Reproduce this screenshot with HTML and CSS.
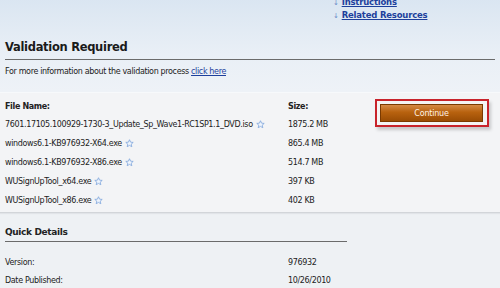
FILE: index.html
```html
<!DOCTYPE html>
<html lang="en">
<head>
    <meta charset="UTF-8">
    <title>Validation Required</title>
    <link rel="stylesheet" href="styles.css">
</head>
<body>
    <div class="top">
        <ul class="links">
            <li><span class="arrow">&#8595;</span><a href="#">Instructions</a></li>
            <li><span class="arrow">&#8595;</span><a href="#">Related Resources</a></li>
        </ul>
        <h1>Validation Required</h1>
        <p class="intro">For more information about the validation process <a href="#">click here</a></p>
    </div>

    <div class="files">
        <div class="file-table">
            <div class="row head">
                <span class="name">File Name:</span>
                <span class="size">Size:</span>
            </div>
            <div class="row">
                <span class="name">7601.17105.100929-1730-3_Update_Sp_Wave1-RC1SP1.1_DVD.iso <svg class="star" viewBox="0 0 10 10"><path d="M5 .8l1.2 2.7 2.9.3-2.2 1.9.7 2.9L5 7.1 2.4 8.6l.7-2.9L.9 3.8l2.9-.3z"/></svg></span>
                <span class="size">1875.2 MB</span>
            </div>
            <div class="row">
                <span class="name">windows6.1-KB976932-X64.exe <svg class="star" viewBox="0 0 10 10"><path d="M5 .8l1.2 2.7 2.9.3-2.2 1.9.7 2.9L5 7.1 2.4 8.6l.7-2.9L.9 3.8l2.9-.3z"/></svg></span>
                <span class="size">865.4 MB</span>
            </div>
            <div class="row">
                <span class="name">windows6.1-KB976932-X86.exe <svg class="star" viewBox="0 0 10 10"><path d="M5 .8l1.2 2.7 2.9.3-2.2 1.9.7 2.9L5 7.1 2.4 8.6l.7-2.9L.9 3.8l2.9-.3z"/></svg></span>
                <span class="size">514.7 MB</span>
            </div>
            <div class="row">
                <span class="name">WUSignUpTool_x64.exe <svg class="star" viewBox="0 0 10 10"><path d="M5 .8l1.2 2.7 2.9.3-2.2 1.9.7 2.9L5 7.1 2.4 8.6l.7-2.9L.9 3.8l2.9-.3z"/></svg></span>
                <span class="size">397 KB</span>
            </div>
            <div class="row">
                <span class="name">WUSignUpTool_x86.exe <svg class="star" viewBox="0 0 10 10"><path d="M5 .8l1.2 2.7 2.9.3-2.2 1.9.7 2.9L5 7.1 2.4 8.6l.7-2.9L.9 3.8l2.9-.3z"/></svg></span>
                <span class="size">402 KB</span>
            </div>
        </div>
        <div class="action">
            <div class="highlight">
                <button>Continue</button>
            </div>
        </div>
    </div>

    <div class="details">
        <h2>Quick Details</h2>
        <div class="row">
            <span class="name">Version:</span>
            <span class="size">976932</span>
        </div>
        <div class="row">
            <span class="name">Date Published:</span>
            <span class="size">10/26/2010</span>
        </div>
    </div>
</body>
</html>
```

FILE: styles.css
```css
* {
    box-sizing: border-box;
    margin: 0;
    padding: 0;
}

body {
    background-color: #eef1f4;
    font-family: 'DejaVu Sans', Verdana, sans-serif;
    font-size: 8px;
    letter-spacing: -0.35px;
    color: #222;
    overflow: hidden;
}

a {
    color: #1d3f9c;
}

.top {
    background: linear-gradient(to bottom, #d9e5f1, #e9eff6 60%, #eef2f7);
    padding: 0 5px 14px 5px;
}

.links {
    list-style: none;
    margin-left: 328px;
    margin-top: -4px;
    height: 27px;
}

.links li {
    height: 13px;
    line-height: 13px;
    font-size: 8.5px;
    font-weight: bold;
    letter-spacing: -0.2px;
}

.links .arrow {
    color: #6a8cc8;
    font-weight: normal;
    font-size: 7px;
    margin-right: 3px;
}

h1 {
    font-size: 11.5px;
    font-weight: bold;
    letter-spacing: -0.3px;
    color: #1a1a1a;
    height: 19px;
    line-height: 19px;
    padding-top: 15px;
    box-sizing: content-box;
    border-bottom: 1.5px solid #6b6b6b;
    padding-bottom: 2px;
}

.intro {
    margin-top: 6px;
    line-height: 12px;
}

.files {
    display: flex;
    background-color: #f3f4f6;
    border-top: 1px solid #f7f9fb;
    border-bottom: 1px solid #d2d5d9;
    box-shadow: 0 1px 1px #e1e4e8;
    padding: 4px 5px 2px 5px;
}

.file-table {
    width: 360px;
}

.row {
    display: flex;
    height: 19px;
    align-items: center;
}

.row .name {
    width: 283px;
    display: flex;
    align-items: center;
    gap: 3px;
}

.row.head {
    font-weight: bold;
    height: 18px;
}

.star {
    width: 9px;
    height: 9px;
    fill: #eef4fc;
    stroke: #7fa6dc;
    stroke-width: 0.9;
}

.action {
    padding-top: 2px;
    padding-left: 10px;
}

.highlight {
    width: 114px;
    height: 28px;
    border: 2px solid #c8232b;
    padding: 3px 4px 3px 3px;
    box-shadow: 2px 3px 3px rgba(0,0,0,0.18);
    background-color: #f4f4f4;
}

.highlight button {
    width: 103px;
    height: 18px;
    border: 1px solid #7a3a00;
    background: linear-gradient(to bottom, #d58a45, #b8620f 45%, #9a4c04);
    color: #fff3e6;
    font-family: 'DejaVu Sans', Verdana, sans-serif;
    font-size: 8px;
    letter-spacing: -0.2px;
    cursor: pointer;
}

.details {
    padding: 13px 5px 0 5px;
}

.details h2 {
    font-size: 9px;
    font-weight: bold;
    width: 342px;
    border-bottom: 1.5px solid #6b6b6b;
    padding-bottom: 3px;
    margin-bottom: 11px;
    line-height: 12px;
}

.details .row {
    height: 18px;
}
```
